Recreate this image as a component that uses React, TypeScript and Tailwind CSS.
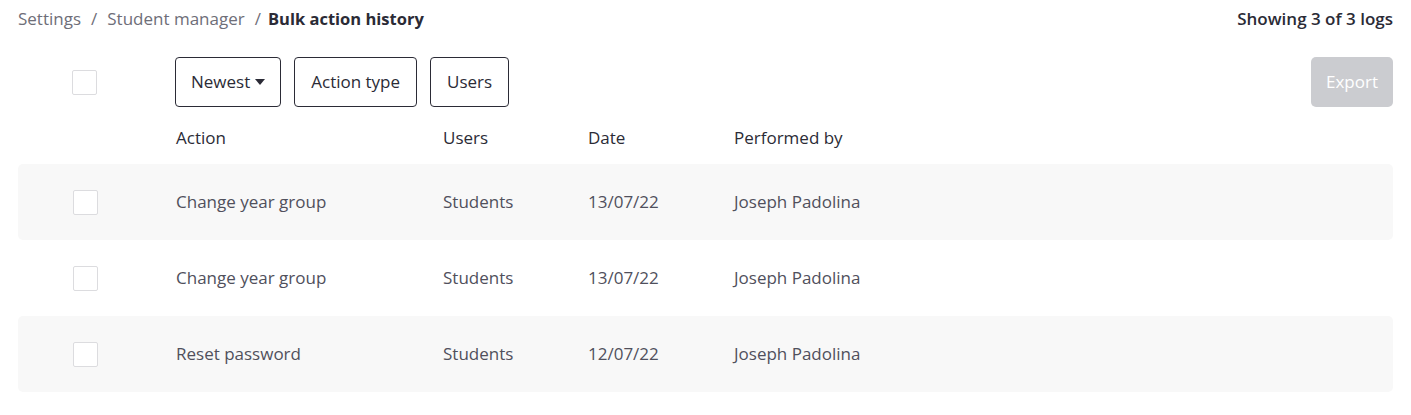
const rows = [
  { action: "Change year group", users: "Students", date: "13/07/22", by: "Joseph Padolina" },
  { action: "Change year group", users: "Students", date: "13/07/22", by: "Joseph Padolina" },
  { action: "Reset password", users: "Students", date: "12/07/22", by: "Joseph Padolina" },
];

function Checkbox() {
  return <span className="block w-[25px] h-[25px] border border-[#dcdcdf] rounded-[2px] bg-white" />;
}

export default function App() {
  return (
    <div className="px-[18px] bg-white text-[17px] text-[#3b3b47]" style={{ fontFamily: "'Open Sans', Lato, sans-serif" }}>
      <div className="flex items-center justify-between h-[38px]">
        <div className="flex items-center gap-[10px] text-[#6e6e78]">
          <span>Settings</span>
          <span>/</span>
          <span>Student manager</span>
          <span>/</span>
          <span className="font-bold text-[16.5px] text-[#2b2b36] -ml-[3px]">Bulk action history</span>
        </div>
        <div className="font-semibold text-[#2b2b36]">Showing 3 of 3 logs</div>
      </div>

      <div className="flex items-center mt-[19px] h-[50px]">
        <div className="w-[157px] flex pl-[54px]">
          <Checkbox />
        </div>
        <div className="flex gap-[13px] flex-1">
          <button className="h-[50px] px-[15px] border border-[#2b2b36] rounded-[4px] flex items-center gap-[5px] text-[#2b2b36]">
            Newest
            <svg width="10" height="6" viewBox="0 0 10 6"><path d="M0 0h10L5 6z" fill="#2b2b36" /></svg>
          </button>
          <button className="h-[50px] px-[16px] border border-[#2b2b36] rounded-[4px] text-[#2b2b36]">Action type</button>
          <button className="h-[50px] px-[16px] border border-[#2b2b36] rounded-[4px] text-[#2b2b36]">Users</button>
        </div>
        <button className="h-[50px] w-[82px] rounded-[5px] bg-[#cbccd0] text-white">Export</button>
      </div>

      <div className="grid grid-cols-[158px_267px_145px_146px_1fr] items-center h-[57px] pt-[4px] text-[#2b2b36] font-medium">
        <div />
        <div>Action</div>
        <div>Users</div>
        <div>Date</div>
        <div>Performed by</div>
      </div>

      <div className="flex flex-col">
        {rows.map((r, i) => (
          <div
            key={i}
            className={`grid grid-cols-[158px_267px_145px_146px_1fr] items-center h-[76px] rounded-[5px] text-[#50505c] ${i % 2 === 0 ? "bg-[#f8f8f8]" : "bg-white"}`}
          >
            <div className="pl-[55px]">
              <Checkbox />
            </div>
            <div>{r.action}</div>
            <div>{r.users}</div>
            <div>{r.date}</div>
            <div>{r.by}</div>
          </div>
        ))}
      </div>
    </div>
  );
}
